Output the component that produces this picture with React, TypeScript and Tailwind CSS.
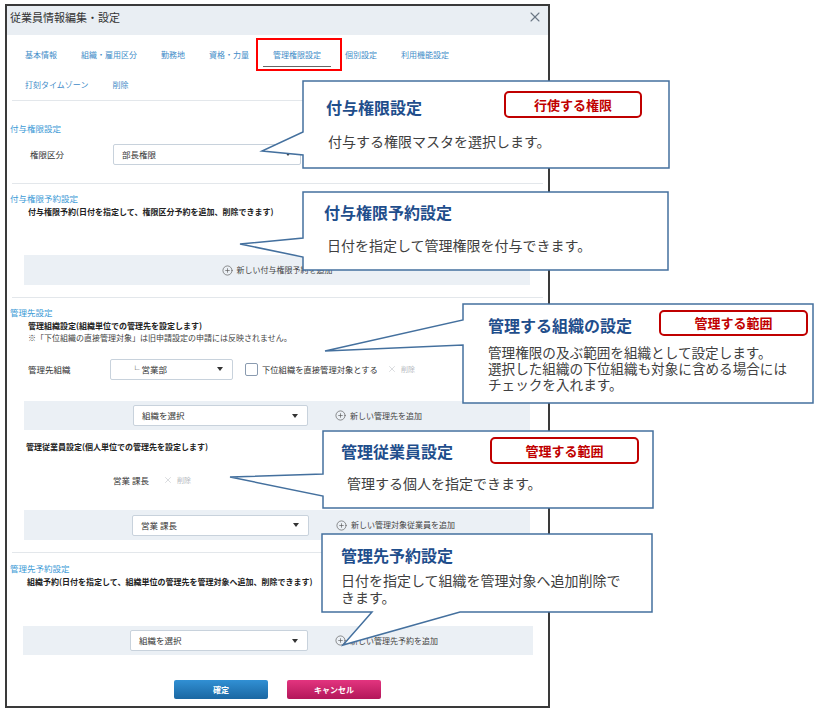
import { X, CirclePlus } from 'lucide-react';

const tabsRow1 = ['基本情報', '組織・雇用区分', '勤務地', '資格・力量', '管理権限設定', '個別設定', '利用機能設定'];
const tabsRow2 = ['打刻タイムゾーン', '削除'];

const Arrow = () => (
  <span className="w-0 h-0 border-l-[3.5px] border-r-[3.5px] border-t-[4px] border-l-transparent border-r-transparent border-t-[#333]" />
);

const Select = ({ label, width }: { label: string; width: string }) => (
  <div
    className={`${width} h-[21px] bg-white border border-[#c8d2dc] rounded-[2px] flex items-center justify-between pl-[8px] pr-[9px] text-[8.5px] text-[#333]`}
  >
    <span>{label}</span>
    <Arrow />
  </div>
);

const AddLink = ({ label }: { label: string }) => (
  <div className="flex items-center gap-[4px] text-[8px] text-[#444]">
    <CirclePlus size={11} strokeWidth={1.4} className="text-[#555]" />
    <span>{label}</span>
  </div>
);

const Divider = ({ className = '' }: { className?: string }) => (
  <div className={`h-px bg-[#e3e7eb] mx-[5px] ${className}`} />
);

const Heading = ({ children, className = '' }: { children: string; className?: string }) => (
  <div className={`h-[12px] leading-[12px] ml-[3px] text-[8.5px] text-[#3c9ad6] ${className}`}>{children}</div>
);

const Bold = ({ children, className = '' }: { children: string; className?: string }) => (
  <div className={`h-[12px] leading-[12px] text-[8px] font-bold text-[#222] ${className}`}>{children}</div>
);

const Delete = () => (
  <div className="flex items-center gap-[4px] text-[#b5b9be]">
    <X size={10} strokeWidth={1.2} />
    <span className="text-[7px]">削除</span>
  </div>
);

const Modal = () => (
  <div className="ml-[5px] mt-[4px] w-[545px] h-[704px] border-2 border-[#3a3a3a] bg-white flex flex-col">
    <div className="h-[29px] bg-[#e9eef3] flex justify-between items-start pl-[3px] pr-[5px] pt-[5px]">
      <span className="text-[11px] leading-[13px] text-[#333]">従業員情報編集・設定</span>
      <X size={16} strokeWidth={1.6} className="text-[#6b7785] mt-[-2px]" />
    </div>

    <div className="pt-[5px] pl-[6px]">
      <div className="h-[30px] flex">
        {tabsRow1.map((t) => (
          <div key={t} className="relative px-[12px] flex items-center text-[8px] text-[#3f8cc8]">
            {t}
            {t === '管理権限設定' && (
              <>
                <span className="absolute left-[2px] right-[2px] bottom-[3px] h-px bg-[#666]" />
                <span className="absolute left-[-5px] right-[-9px] top-[-2px] bottom-[-1px] border-2 border-[#ff0000]" />
              </>
            )}
          </div>
        ))}
      </div>
      <div className="h-[30px] flex">
        {tabsRow2.map((t) => (
          <div key={t} className="px-[12px] flex items-center text-[8px] text-[#3f8cc8]">
            {t}
          </div>
        ))}
      </div>
    </div>
    <Divider />

    {/* 付与権限設定 */}
    <Heading className="mt-[21px]">付与権限設定</Heading>
    <div className="mt-[10px] h-[20px] flex items-center pl-[23px]">
      <span className="w-[83px] text-[8.5px] text-[#333]">権限区分</span>
      <Select label="部長権限" width="w-[188px]" />
    </div>
    <Divider className="mt-[19px]" />

    {/* 付与権限予約設定 */}
    <Heading className="mt-[8px]">付与権限予約設定</Heading>
    <Bold className="mt-[2px] ml-[21px]">付与権限予約(日付を指定して、権限区分予約を追加、削除できます)</Bold>
    <div className="mt-[37px] ml-[17px] w-[506px] h-[30px] bg-[#ebf0f5] flex items-center justify-center">
      <AddLink label="新しい付与権限予約を追加" />
    </div>
    <Divider className="mt-[12px]" />

    {/* 管理先設定 */}
    <Heading className="mt-[8px]">管理先設定</Heading>
    <Bold className="mt-[2px] ml-[21px]">管理組織設定(組織単位での管理先を設定します)</Bold>
    <div className="h-[12px] leading-[12px] ml-[21px] text-[8px] text-[#444]">
      ※「下位組織の直接管理対象」は旧申請設定の申請には反映されません。
    </div>
    <div className="mt-[15px] h-[20px] flex items-center pl-[21px]">
      <span className="w-[82px] text-[8.5px] text-[#333]">管理先組織</span>
      <div className="w-[123px] h-[21px] bg-white border border-[#c8d2dc] rounded-[2px] flex items-center justify-between pl-[20px] pr-[9px] text-[8.5px] text-[#333]">
        <span>└ 営業部</span>
        <Arrow />
      </div>
      <span className="ml-[12px] w-[13px] h-[13px] border border-[#8a9bb0] rounded-[2px] bg-white" />
      <span className="ml-[4px] text-[8.3px] text-[#333]">下位組織を直接管理対象とする</span>
      <div className="ml-[9px]">
        <Delete />
      </div>
    </div>
    <div className="mt-[22px] ml-[17px] w-[506px] h-[29px] bg-[#ebf0f5] flex items-center pl-[109px]">
      <Select label="組織を選択" width="w-[175px]" />
      <div className="ml-[27px]">
        <AddLink label="新しい管理先を追加" />
      </div>
    </div>
    <Bold className="mt-[11px] ml-[19px]">管理従業員設定(個人単位での管理先を設定します)</Bold>
    <div className="mt-[21px] h-[12px] flex items-center pl-[106px] gap-[14px]">
      <span className="text-[8.5px] text-[#333]">営業 課長</span>
      <Delete />
    </div>
    <div className="mt-[24px] ml-[17px] w-[506px] h-[30px] bg-[#ebf0f5] flex items-center pl-[108px]">
      <Select label="営業 課長" width="w-[177px]" />
      <div className="ml-[27px]">
        <AddLink label="新しい管理対象従業員を追加" />
      </div>
    </div>
    <Divider className="mt-[12px]" />

    {/* 管理先予約設定 */}
    <Heading className="mt-[9px]">管理先予約設定</Heading>
    <Bold className="mt-[2px] ml-[20px]">組織予約(日付を指定して、組織単位の管理先を管理対象へ追加、削除できます)</Bold>
    <div className="mt-[38px] ml-[16px] w-[510px] h-[29px] bg-[#ebf0f5] flex items-center pl-[107px]">
      <Select label="組織を選択" width="w-[178px]" />
      <div className="ml-[27px]">
        <AddLink label="新しい管理先予約を追加" />
      </div>
    </div>

    <div className="mt-[25px] flex justify-center gap-[19px]">
      <button className="w-[94px] h-[19px] rounded-[2px] bg-linear-to-b from-[#3190d4] to-[#1a67a2] text-white text-[8px] font-bold">
        確定
      </button>
      <button className="w-[94px] h-[19px] rounded-[2px] bg-linear-to-b from-[#e3347f] to-[#b3165a] text-white text-[8px] font-bold">
        キャンセル
      </button>
    </div>
  </div>
);

const Badge = ({ label, className }: { label: string; className: string }) => (
  <div
    className={`absolute border-2 border-[#c00000] rounded-[5px] bg-white flex items-center justify-center text-[13px] font-bold text-[#c00000] ${className}`}
  >
    {label}
  </div>
);

const Callouts = () => (
  <>
    <svg className="absolute inset-0 pointer-events-none" width={822} height={715}>
      <g fill="#fff" stroke="#44709e" strokeWidth={1.5} strokeLinejoin="miter">
        <path d="M303 81 H669 V168 H303 V155 L262 151 L303 132 Z" />
        <path d="M303 192 H668 V270 H303 V257 L240 244 L303 238 Z" />
        <path d="M463 304 H813 V403 H463 V345 L325 351 L463 320 Z" />
        <path d="M323 431 H653 V508 H323 V496 L230 477 L323 474 Z" />
        <path d="M322 534 H652 V612 H460 L343 645 L372 612 H322 Z" />
      </g>
    </svg>

    <div className="absolute left-[326px] top-[97px] text-[16px] leading-[20px] font-bold text-[#1f4e8c]">付与権限設定</div>
    <Badge label="行使する権限" className="left-[504px] top-[91px] w-[138px] h-[27px]" />
    <div className="absolute left-[328px] top-[131px] text-[14px] leading-[20px] text-[#404040]">
      付与する権限マスタを選択します。
    </div>

    <div className="absolute left-[324px] top-[202px] text-[16px] leading-[20px] font-bold text-[#1f4e8c]">付与権限予約設定</div>
    <div className="absolute left-[327px] top-[235px] text-[14px] leading-[20px] text-[#404040]">
      日付を指定して管理権限を付与できます。
    </div>

    <div className="absolute left-[488px] top-[315px] text-[16px] leading-[20px] font-bold text-[#1f4e8c]">管理する組織の設定</div>
    <Badge label="管理する範囲" className="left-[659px] top-[310px] w-[149px] h-[26px]" />
    <div className="absolute left-[488px] top-[344px] flex flex-col text-[13.6px] leading-[16px] text-[#404040] whitespace-nowrap">
      <span>管理権限の及ぶ範囲を組織として設定します。</span>
      <span>選択した組織の下位組織も対象に含める場合には</span>
      <span>チェックを入れます。</span>
    </div>

    <div className="absolute left-[341px] top-[441px] text-[16px] leading-[20px] font-bold text-[#1f4e8c]">管理従業員設定</div>
    <Badge label="管理する範囲" className="left-[490px] top-[437px] w-[149px] h-[27px]" />
    <div className="absolute left-[347px] top-[473px] text-[14px] leading-[20px] text-[#404040]">
      管理する個人を指定できます。
    </div>

    <div className="absolute left-[341px] top-[545px] text-[16px] leading-[20px] font-bold text-[#1f4e8c]">管理先予約設定</div>
    <div className="absolute left-[341px] top-[572px] flex flex-col text-[14px] leading-[17px] text-[#404040] whitespace-nowrap">
      <span>日付を指定して組織を管理対象へ追加削除で</span>
      <span>きます。</span>
    </div>
  </>
);

export default function App() {
  return (
    <div className="relative w-[822px] h-[715px] bg-white overflow-hidden font-['Noto_Sans_CJK_JP','Noto_Sans',sans-serif]">
      <Modal />
      <Callouts />
    </div>
  );
}
